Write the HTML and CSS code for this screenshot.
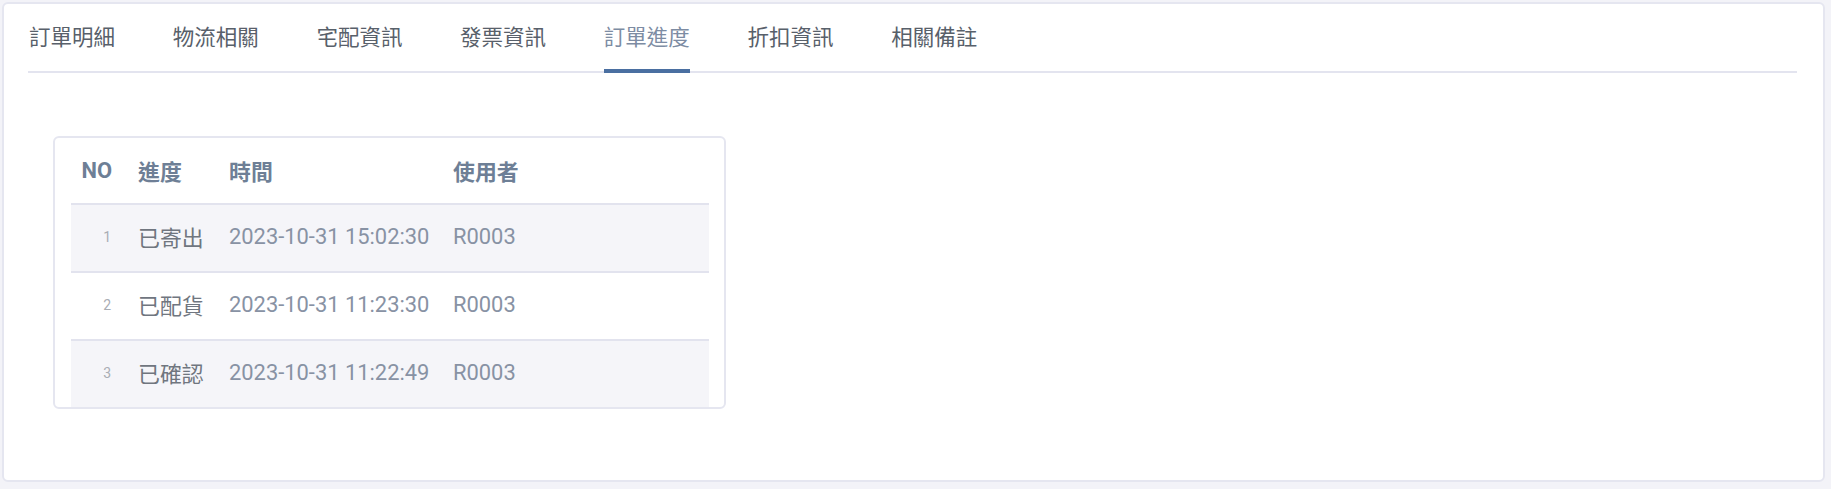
FILE: index.html
```html
<!DOCTYPE html>
<html lang="zh-Hant">
<head>
<meta charset="utf-8">
<title>訂單進度</title>
<link rel="stylesheet" href="styles.css">
</head>
<body>
<div class="panel">
  <nav class="tabs">
    <a class="tab">訂單明細</a>
    <a class="tab">物流相關</a>
    <a class="tab">宅配資訊</a>
    <a class="tab">發票資訊</a>
    <a class="tab active">訂單進度</a>
    <a class="tab">折扣資訊</a>
    <a class="tab">相關備註</a>
  </nav>
  <div class="content">
    <div class="table-card">
      <table class="progress">
        <colgroup>
          <col class="c-no"><col class="c-step"><col class="c-time"><col class="c-user">
        </colgroup>
        <thead>
          <tr><th class="no">NO</th><th>進度</th><th>時間</th><th>使用者</th></tr>
        </thead>
        <tbody>
          <tr><td class="no">1</td><td class="step">已寄出</td><td>2023-10-31 15:02:30</td><td>R0003</td></tr>
          <tr><td class="no">2</td><td class="step">已配貨</td><td>2023-10-31 11:23:30</td><td>R0003</td></tr>
          <tr><td class="no">3</td><td class="step">已確認</td><td>2023-10-31 11:22:49</td><td>R0003</td></tr>
        </tbody>
      </table>
    </div>
  </div>
</div>
</body>
</html>
```
FILE: styles.css
```css
* { box-sizing: border-box; }
html, body { margin: 0; }
body {
  background: #f3f3f8;
  padding: 2px 6px 7px 2px;
  height: 489px;
  font-family: Roboto, "Noto Sans CJK TC", sans-serif;
  font-size: 21px;
}
.panel {
  height: 100%;
  background: #fff;
  border: 2px solid #e5e6f0;
  border-radius: 6px;
}
.tabs {
  display: flex;
  gap: 57.7px;
  margin: 0 26px 0 24px;
  padding-left: 1px;
  border-bottom: 2px solid #e3e4ef;
}
.tab {
  display: block;
  padding: 20px 0 17px;
  font-size: 21.5px;
  line-height: 28px;
  color: #58606a;
  border-bottom: 4px solid transparent;
  margin-bottom: -2px;
  cursor: pointer;
}
.tab.active {
  color: #7d8ca3;
  border-bottom-color: #4a6fa1;
}
.content {
  padding: 63px 24px 0 24px;
}
.table-card {
  width: 673px;
  margin-left: 25px;
  border: 2px solid #e5e6f0;
  border-radius: 6px;
  padding: 0 15px 0 16px;
  background: #fff;
  font-size: 21.9px;
}
.progress {
  width: 638px;
  border-collapse: collapse;
  table-layout: fixed;
}
.c-no { width: 54px; }
.c-step { width: 91px; }
.c-time { width: 224px; }
.progress th, .progress td {
  padding: 0 0 0 13px;
  text-align: left;
  white-space: nowrap;
}
.progress th {
  height: 66px;
  font-weight: 700;
  color: #6e7f96;
  border-bottom: 2px solid #e2e3ee;
}
.progress th.no {
  text-align: right;
  padding: 0 13px 0 0;
}
.progress td {
  height: 68px;
  padding-bottom: 3px;
  color: #8892a4;
}
.progress tbody tr { border-bottom: 2px solid #e2e3ee; }
.progress tbody tr:last-child { border-bottom: 0; }
.progress tbody tr:last-child td { height: 67px; }
.progress tbody tr:nth-child(odd) { background: #f5f5f9; }
.progress td.no {
  text-align: right;
  font-size: 14px;
  color: #a9adb4;
  padding: 0 14px 3px 0;
}
.progress td.step { color: #70767f; }
```
